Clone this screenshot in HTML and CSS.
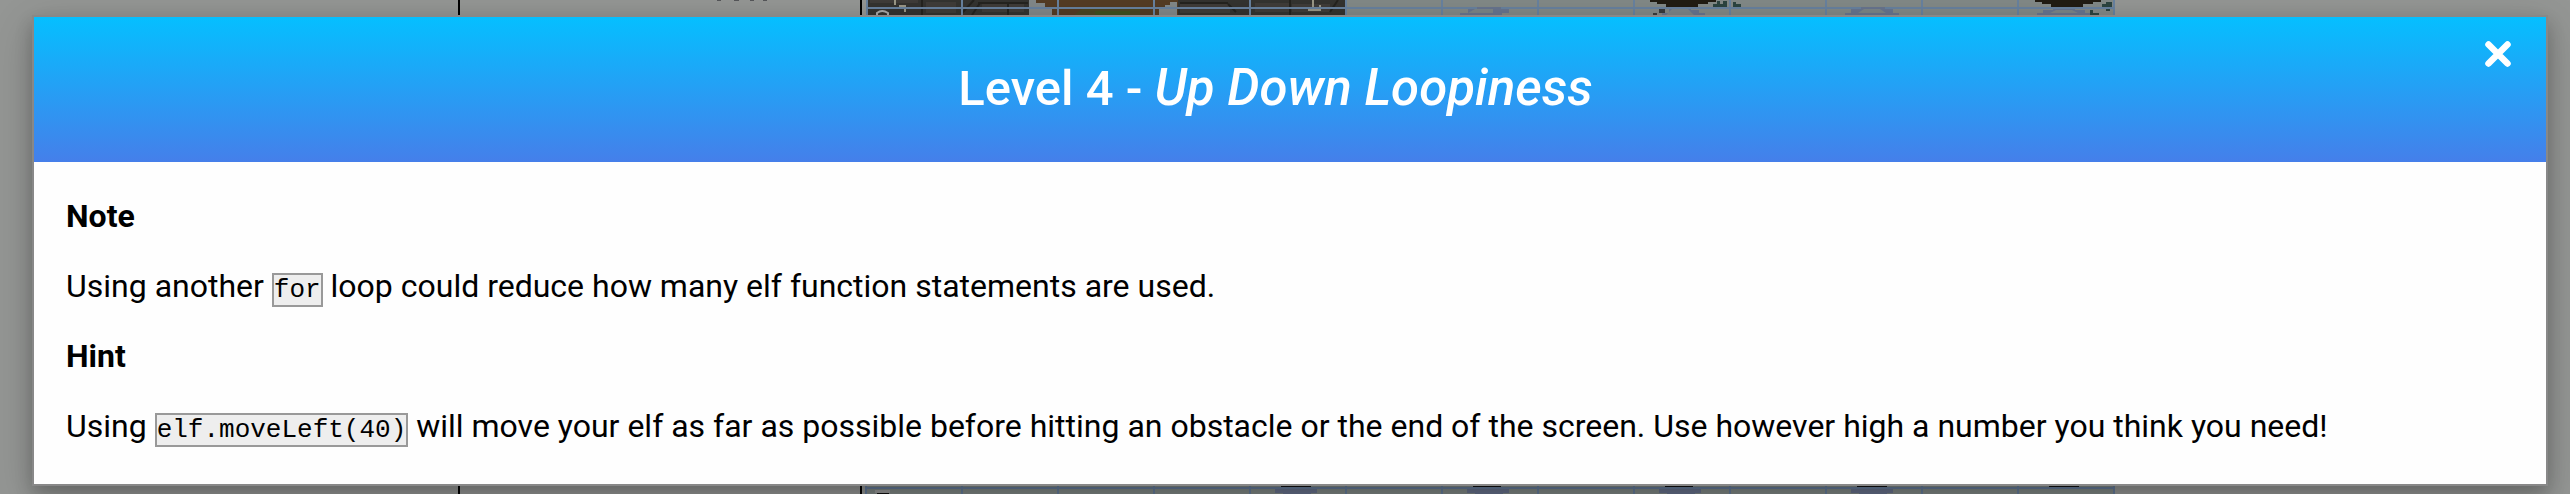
FILE: index.html
```
<!DOCTYPE html>
<html lang="en">
<head>
<meta charset="utf-8">
<meta name="viewport" content="width=device-width, initial-scale=1">
<title>Level 4 - Up Down Loopiness</title>
<link rel="stylesheet" href="styles.css">
</head>
<body>
<svg class="game game-top" viewBox="0 0 2570 17" aria-hidden="true">
  <path d="M459 0v15M861 0v15" stroke="#000" stroke-width="2"/>
  <path d="M717 0h4v1h-4zM734 0h5v1h-5zM750 0h4v1h-4zM763 0h4v1h-4z" fill="#555659"/>
  <path d="M866 0h479v15H866z" fill="#343330"/>
  <path d="M870 0h48v3h-48zM926 2h30v11h-30zM982 4h42v8h-42zM1180 4h50v9h-50zM1255 3h34v9h-34zM1292 4h38v8h-38z" fill="#3f3c39"/>
  <path d="M922 0v15M962 13l12-13M972 15l8-12M978 3h50M1008 4v11M1180 3h48M1228 4l8 8M1290 0v15M1330 12l8-12" stroke="#24231f" stroke-width="2" fill="none"/>
  <path d="M1030 0h148v15h-126v-3h-5V7h-5V3h-12z" fill="#543c24"/>
  <path d="M1082 9h58v6h-66z" fill="#4b4622"/><path d="M1095 11h35v4h-35z" fill="#41501d"/>
  <path d="M1029 0h7v3h9v4h7v8h-23zM1170 2h7v13h-18V9h6V5h5z" fill="#828889"/>
  <path d="M895 0v5M899 6h6v6M890 8h8M1313 0v10M1308 10h12V5" stroke="#9a9787" stroke-width="2" fill="none"/>
  <path d="M877 15v-2q5-4 11 0v2" fill="none" stroke="#aaa" stroke-width="2"/>
  <path d="M1345 0h770v15h-770z" fill="#828987"/>
  <path d="M866 8h1249M867 0v15M962 0v15M1058 0v15M1154 0v15M1250 0v15M1346 0v15M1442 0v15M1538 0v15M1634 0v15M1730 0v15M1826 0v15M1922 0v15M2018 0v15M2114 0v15" stroke="#68829f" stroke-width="2" fill="none"/>
  <path d="M1477 7h24v2h8v4h-7v2h-42v-2h8V9h9zM1669 9h22v1h8v3h6v2h-43v-2h7zM1861 7h24v2h8v4h6v2h-54v-2h6V9h10zM2053 9h22v1h10v3h6v2h-54v-2h6v-3h10z" fill="#68758f"/>
  <path d="M1475 9h18v4h-25zM1672 9h16l6 6h-28zM1864 9h16l6 4h-28zM2056 10h16l6 3h-28z" fill="#7c8588"/>
  <path d="M1650 0h66v2h-8v2h-10v3h-32V4h-9V2h-7zM2035 0h66v2h-8v2h-10v3h-32V4h-9V2h-7z" fill="#211c13"/>
  <path d="M1659 9h6v4h-6zM1653 13h4v2h-4z" fill="#383b3d"/>
  <path d="M1713 7V4h4V1h3v3h3V1h4v6zM1733 7V2h3v2h5v3zM2102 7V4h4V2h6v5zM2090 15v-5h3v3h6v2zM2106 9h4v2h-4z" fill="#2c4440"/>
</svg>
<svg class="game game-bottom" viewBox="0 0 2570 8" aria-hidden="true">
  <path d="M459 0v8M861 0v8" stroke="#000" stroke-width="2"/>
  <path d="M866 0h1249v8H866z" fill="#7f8785"/>
  <path d="M866 2h1249M866 0v8M962 0v8M1058 0v8M1154 0v8M1250 0v8M1346 0v8M1442 0v8M1538 0v8M1634 0v8M1730 0v8M1826 0v8M1922 0v8M2018 0v8M2114 0v8" stroke="#647a98" stroke-width="2" fill="none"/>
  <path d="M1275 3h42v4h-6v1h-28V7h-8zM1467 3h42v4h-6v1h-28V7h-8zM1659 3h42v4h-6v1h-28V7h-8zM1851 3h42v4h-6v1h-28V7h-8z" fill="#66708a"/>
  <path d="M1281 0h30v1h-30zM1473 0h28v1h-28zM1665 0h28v1h-28zM1857 0h30v1h-30zM2049 0h30v1h-30zM877 7h12v1h-12z" fill="#111"/>
  <path d="M875 4h15v3h-15z" fill="#999"/>
</svg>
<main class="modal" role="dialog" aria-labelledby="modal-title">
  <header class="modal-header">
    <h1 class="modal-title" id="modal-title">Level 4 - <em class="level-name">Up Down Loopiness</em></h1>
    <button class="modal-close" type="button" aria-label="Close">
      <svg class="close-icon" viewBox="0 0 26 26" aria-hidden="true"><path d="M3.500 3.500l19 19M22.500 3.500l-19 19" stroke="#fff" stroke-width="6.500" stroke-linecap="round"/></svg>
    </button>
  </header>
  <div class="modal-body">
    <h2 class="modal-heading">Note</h2>
    <p class="modal-text">Using another <code class="code">for</code> loop could reduce how many elf function statements are used.</p>
    <h2 class="modal-heading">Hint</h2>
    <p class="modal-text">Using <code class="code">elf.moveLeft(40)</code> will move your elf as far as possible before hitting an obstacle or the end of the screen. Use however high a number you think you need!</p>
  </div>
</main>
</body>
</html>
```
FILE: styles.css
```
* {
  box-sizing: border-box;
}

body {
  position: relative;
  margin: 0;
  padding: 15px 22px 8px 32px;
  background: #949694;
  color: #000;
  font-family: Roboto, "Liberation Sans", sans-serif;
  font-size: 32px;
  line-height: 38px;
  overflow: hidden;
}

.game {
  position: absolute;
  left: 0;
  width: 100%;
  display: block;
}

.game-top {
  top: 0;
}

.game-bottom {
  bottom: 0;
}

.modal {
  position: relative;
  background: #fefefe;
  border: 2px solid #888;
  box-shadow: 0 8px 16px rgba(0, 0, 0, 0.2), 0 12px 40px rgba(0, 0, 0, 0.19);
}

.modal-header {
  display: flex;
  align-items: flex-start;
  padding: 24px 35px 45px 32px;
  background: linear-gradient(#05bfff, #457fea);
  color: #fff;
  text-align: center;
}

.modal-title {
  flex: 1;
  margin: 0;
  padding-top: 20px;
  font-size: 49px;
  line-height: 56px;
  font-weight: 500;
}

.level-name {
  font-size: 51px;
  line-height: 1;
}

.modal-close {
  padding: 0;
  border: 0;
  background: none;
  cursor: pointer;
}

.close-icon {
  display: block;
  width: 26px;
  height: 26px;
}

.modal-body {
  display: flex;
  flex-direction: column;
  gap: 32px;
  padding: 35px 32px 39px;
}

.modal-heading,
.modal-text {
  margin: 0;
  font-size: 32px;
}

.modal-heading {
  font-weight: 700;
}

.code {
  background: #eee;
  border: 2px solid #999;
  font-family: "Courier New", "Liberation Mono", monospace;
  font-size: 26px;
  line-height: 20px;
}
```
